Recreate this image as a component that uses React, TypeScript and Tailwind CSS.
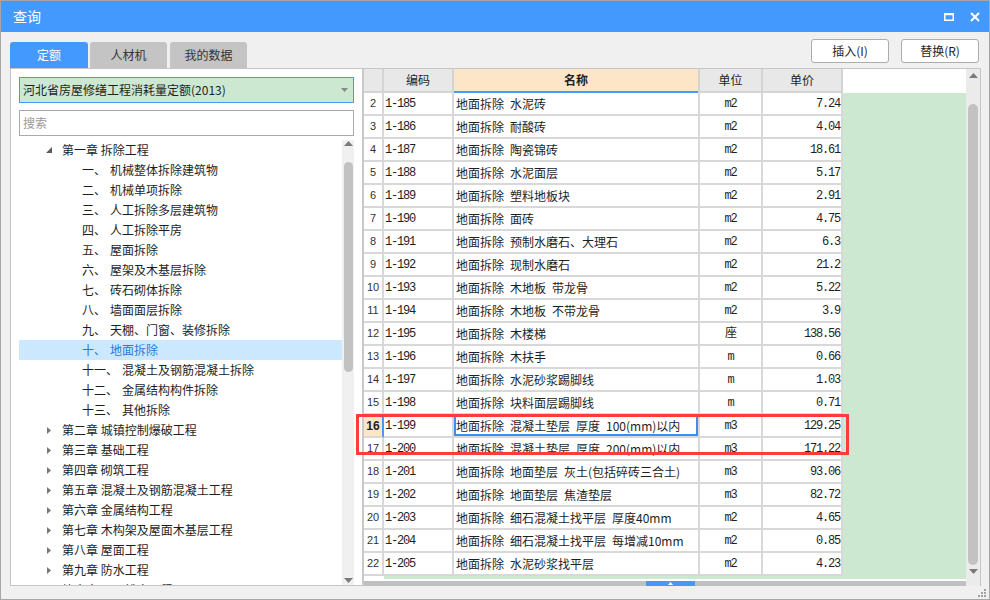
import React from "react";

const subs: [string, string][] = [
  ["一", "机械整体拆除建筑物"],
  ["二", "机械单项拆除"],
  ["三", "人工拆除多层建筑物"],
  ["四", "人工拆除平房"],
  ["五", "屋面拆除"],
  ["六", "屋架及木基层拆除"],
  ["七", "砖石砌体拆除"],
  ["八", "墙面面层拆除"],
  ["九", "天棚、门窗、装修拆除"],
  ["十", "地面拆除"],
  ["十一", "混凝土及钢筋混凝土拆除"],
  ["十二", "金属结构构件拆除"],
  ["十三", "其他拆除"],
];

const chapters = [
  "第二章 城镇控制爆破工程",
  "第三章 基础工程",
  "第四章 砌筑工程",
  "第五章 混凝土及钢筋混凝土工程",
  "第六章 金属结构工程",
  "第七章 木构架及屋面木基层工程",
  "第八章 屋面工程",
  "第九章 防水工程",
  "第十章 屋面排水工程",
];

const rows: [number, string, string, string, string][] = [
  [2, "1-185", "地面拆除 水泥砖", "m2", "7.24"],
  [3, "1-186", "地面拆除 耐酸砖", "m2", "4.04"],
  [4, "1-187", "地面拆除 陶瓷锦砖", "m2", "18.61"],
  [5, "1-188", "地面拆除 水泥面层", "m2", "5.17"],
  [6, "1-189", "地面拆除 塑料地板块", "m2", "2.91"],
  [7, "1-190", "地面拆除 面砖", "m2", "4.75"],
  [8, "1-191", "地面拆除 预制水磨石、大理石", "m2", "6.3"],
  [9, "1-192", "地面拆除 现制水磨石", "m2", "21.2"],
  [10, "1-193", "地面拆除 木地板 带龙骨", "m2", "5.22"],
  [11, "1-194", "地面拆除 木地板 不带龙骨", "m2", "3.9"],
  [12, "1-195", "地面拆除 木楼梯", "座", "138.56"],
  [13, "1-196", "地面拆除 木扶手", "m", "0.66"],
  [14, "1-197", "地面拆除 水泥砂浆踢脚线", "m", "1.03"],
  [15, "1-198", "地面拆除 块料面层踢脚线", "m", "0.71"],
  [16, "1-199", "地面拆除 混凝土垫层 厚度 100(mm)以内", "m3", "129.25"],
  [17, "1-200", "地面拆除 混凝土垫层 厚度 200(mm)以内", "m3", "171.22"],
  [18, "1-201", "地面拆除 地面垫层 灰土(包括碎砖三合土)", "m3", "93.06"],
  [19, "1-202", "地面拆除 地面垫层 焦渣垫层", "m3", "82.72"],
  [20, "1-203", "地面拆除 细石混凝土找平层 厚度40mm", "m2", "4.65"],
  [21, "1-204", "地面拆除 细石混凝土找平层 每增减10mm", "m2", "0.85"],
  [22, "1-205", "地面拆除 水泥砂浆找平层", "m2", "4.23"],
];

const UpArrow = ({ color = "#7a7a7a" }: { color?: string }) => (
  <svg width="9" height="5" viewBox="0 0 9 5">
    <polygon points="0,5 4.5,0 9,5" fill={color} />
  </svg>
);

const DownArrow = () => (
  <svg width="9" height="5" viewBox="0 0 9 5">
    <polygon points="0,0 9,0 4.5,5" fill="#7a7a7a" />
  </svg>
);

const TreeTree = () => (
  <div className="flex flex-1 min-h-0">
    <div className="flex-1 overflow-hidden">
      <div className="h-[20px] flex items-center pl-[27px]">
        <svg width="6" height="6" viewBox="0 0 6 6" className="mr-[10px]">
          <polygon points="6,0 6,6 0,6" fill="#5a5a5a" />
        </svg>
        <span>第一章 拆除工程</span>
      </div>
      {subs.map(([n, name]) => {
        const sel = n === "十";
        return (
          <div
            key={n}
            className={
              sel
                ? "h-[20px] flex items-center pl-[63px] bg-[#cce8ff] text-[#2b78d4]"
                : "h-[20px] flex items-center pl-[63px]"
            }
          >
            <span>{n}、</span>
            <span className="ml-[4px]">{name}</span>
          </div>
        );
      })}
      {chapters.map((c) => (
        <div key={c} className="h-[20px] flex items-center pl-[28px]">
          <svg width="4" height="7" viewBox="0 0 4 7" className="mr-[11px]">
            <polygon points="0,0 4,3.5 0,7" fill="#777" />
          </svg>
          <span>{c}</span>
        </div>
      ))}
    </div>
    <div className="w-[12px] flex flex-col items-center bg-[#f0f0f0]">
      <div className="pt-[1px]">
        <UpArrow />
      </div>
      <div className="mt-[16px] w-[9px] h-[210px] rounded-full bg-[#c2c2c2]" />
      <div className="flex-1" />
      <div className="pb-[2px]">
        <DownArrow />
      </div>
    </div>
  </div>
);

export default function App() {
  return (
    <div className="relative w-[990px] h-[600px] bg-[#f0f0f0] border border-[#a6a6a6] flex flex-col overflow-hidden font-['Noto_Sans_CJK_SC',sans-serif] text-[12px] text-[#1e1e1e]">
      {/* title bar */}
      <div className="h-[31px] bg-[#4499ff] flex items-center pl-[12px] text-white text-[14px]">
        <span>查询</span>
        <div className="flex-1" />
        <svg width="10" height="8" viewBox="0 0 10 8" className="mr-[16px]">
          <rect x="0.75" y="1" width="8.5" height="6.25" fill="none" stroke="#fff" strokeWidth="1.5" />
          <rect x="0" y="0" width="10" height="2.2" fill="#fff" />
        </svg>
        <svg width="10" height="10" viewBox="0 0 10 10" className="mr-[9px]">
          <path d="M1 1 L9 9 M9 1 L1 9" stroke="#fff" strokeWidth="2" />
        </svg>
      </div>

      <div className="flex flex-1 pl-[9px] pb-[13px] min-h-0">
        {/* left column */}
        <div className="w-[352px] flex flex-col pt-[10px]">
          <div className="flex h-[26px] gap-[2px]">
            <div className="w-[78px] rounded-t-[3px] bg-[#4499ff] text-white flex items-center justify-center">
              定额
            </div>
            <div className="w-[77px] rounded-t-[3px] bg-[#c4c4c4] text-[#333] flex items-center justify-center">
              人材机
            </div>
            <div className="w-[77px] ml-[1px] rounded-t-[3px] bg-[#c4c4c4] text-[#333] flex items-center justify-center">
              我的数据
            </div>
          </div>
          <div className="flex-1 min-h-0 bg-white border border-r-0 border-[#c6c6c6] flex flex-col pl-[8px] pr-[8px] pt-[8px]">
            <div className="h-[26px] border border-[#4499ff] bg-[#cde8d0] flex items-center pl-[3px] pr-[5px]">
              <span className="flex-1">河北省房屋修缮工程消耗量定额(2013)</span>
              <svg width="7" height="4" viewBox="0 0 7 4">
                <polygon points="0,0 7,0 3.5,4" fill="#888" />
              </svg>
            </div>
            <div className="mt-[7px] h-[26px] border border-[#a9a9a9] flex items-center pl-[3px] text-[#9a9a9a]">
              搜索
            </div>
            <div className="mt-[4px] flex flex-1 min-h-0">
              <TreeTree />
            </div>
          </div>
        </div>

        {/* right column */}
        <div className="w-[619px] flex flex-col">
          <div className="pt-[7px] h-[31px] flex justify-end gap-[12px] pr-[2px]">
            <div className="w-[78px] h-[24px] bg-white border border-[#adadad] rounded-[3px] flex items-center justify-center">
              插入(I)
            </div>
            <div className="w-[78px] h-[24px] bg-white border border-[#adadad] rounded-[3px] flex items-center justify-center">
              替换(R)
            </div>
          </div>
          <div className="mt-[5px] flex-1 min-h-0 flex bg-white border-t border-r border-[#c6c6c6]">
            <div className="flex-1 flex flex-col border-l-2 border-[#c8c8c8]">
              {/* header */}
              <div className="h-[24px] flex text-[12px]">
                <div className="w-[20px] bg-[#e8e8e8] border-r-2 border-b-2 border-[#d4d4d4]" />
                <div className="w-[70px] bg-[#e8e8e8] border-r-2 border-b-2 border-[#d4d4d4] flex items-center justify-center">
                  编码
                </div>
                <div className="w-[244px] bg-[#fde6c8] border-b-2 border-[#4499ff] flex items-center justify-center font-bold">
                  名称
                </div>
                <div className="w-[65px] bg-[#e8e8e8] border-l-2 border-r-2 border-b-2 border-[#d4d4d4] flex items-center justify-center">
                  单位
                </div>
                <div className="w-[80px] bg-[#e8e8e8] border-r-2 border-b-2 border-[#d4d4d4] flex items-center justify-center">
                  单价
                </div>
                <div className="flex-1 bg-white" />
              </div>
              {/* body */}
              {rows.map(([n, code, name, unit, price]) => {
                const sel = n === 16;
                return (
                  <div key={n} className="h-[23px] flex">
                    <div
                      className={
                        sel
                          ? "w-[20px] bg-[#fde6c8] border-r-2 border-r-[#4499ff] border-b-2 border-b-[#d8d8d8] flex items-center justify-center font-['Liberation_Sans',sans-serif] text-[12px] font-bold"
                          : "w-[20px] bg-white border-r-2 border-b-2 border-[#d8d8d8] flex items-center justify-center font-['Liberation_Sans',sans-serif] text-[11px] text-[#333]"
                      }
                    >
                      {n}
                    </div>
                    <div className="w-[70px] border-r-2 border-b-2 border-[#d8d8d8] flex items-center pl-[1px] font-['Liberation_Mono',monospace] tracking-[-1.2px]">
                      {code}
                    </div>
                    <div
                      className={
                        sel
                          ? "w-[244px] border-b-2 border-[#d8d8d8] flex items-center pl-[2px] whitespace-pre shadow-[inset_0_0_0_2px_#3d8ee8]"
                          : "w-[244px] border-b-2 border-[#d8d8d8] flex items-center pl-[2px] whitespace-pre"
                      }
                    >
                      {name.replace(/ /g, "\u2002")}
                    </div>
                    <div className="w-[65px] border-l-2 border-r-2 border-b-2 border-[#d8d8d8] flex items-center justify-center font-['Liberation_Mono','Noto_Sans_CJK_SC',monospace] tracking-[-1.2px]">
                      {unit}
                    </div>
                    <div className="w-[80px] border-r-2 border-b-2 border-[#d8d8d8] flex items-center justify-end pr-[1px] font-['Liberation_Mono',monospace] tracking-[-1.2px]">
                      {price}
                    </div>
                    <div className="flex-1 bg-[#cde8d0]" />
                  </div>
                );
              })}
              <div className="h-[3px] flex">
                <div className="w-[20px]" />
                <div className="flex-1 bg-[#cde8d0]" />
              </div>
              <div className="h-[2px]" />
              <div className="h-[5px] flex">
                <div className="w-[282px] bg-[#c0c0c0]" />
                <div className="w-[49px] bg-[#4499ff] flex items-center justify-center">
                  <svg width="5" height="3" viewBox="0 0 5 3">
                    <polygon points="0,3 2.5,0 5,3" fill="#fff" />
                  </svg>
                </div>
                <div className="flex-1 bg-[#c0c0c0]" />
              </div>
            </div>
            {/* vertical scrollbar */}
            <div className="w-[14px] bg-[#ebebeb] flex flex-col items-center">
              <div className="pt-[4px]">
                <UpArrow />
              </div>
              <div className="mt-[26px] w-[10px] h-[461px] rounded-full bg-[#c2c2c2]" />
              <div className="mt-[4px]">
                <DownArrow />
              </div>
            </div>
          </div>
        </div>
      </div>

      {/* annotation box */}
      <div className="absolute left-[355px] top-[413px] w-[493px] h-[41px] border-[3px] border-[#ff3b3b]" />

      {/* resize grip */}
      <svg width="10" height="10" viewBox="0 0 10 10" className="absolute right-[3px] bottom-[2px]">
        <rect x="8" y="2" width="2" height="2" fill="#a0a0a0" />
        <rect x="5" y="5" width="2" height="2" fill="#a0a0a0" />
        <rect x="8" y="5" width="2" height="2" fill="#a0a0a0" />
        <rect x="2" y="8" width="2" height="2" fill="#a0a0a0" />
        <rect x="5" y="8" width="2" height="2" fill="#a0a0a0" />
        <rect x="8" y="8" width="2" height="2" fill="#a0a0a0" />
      </svg>
    </div>
  );
}
